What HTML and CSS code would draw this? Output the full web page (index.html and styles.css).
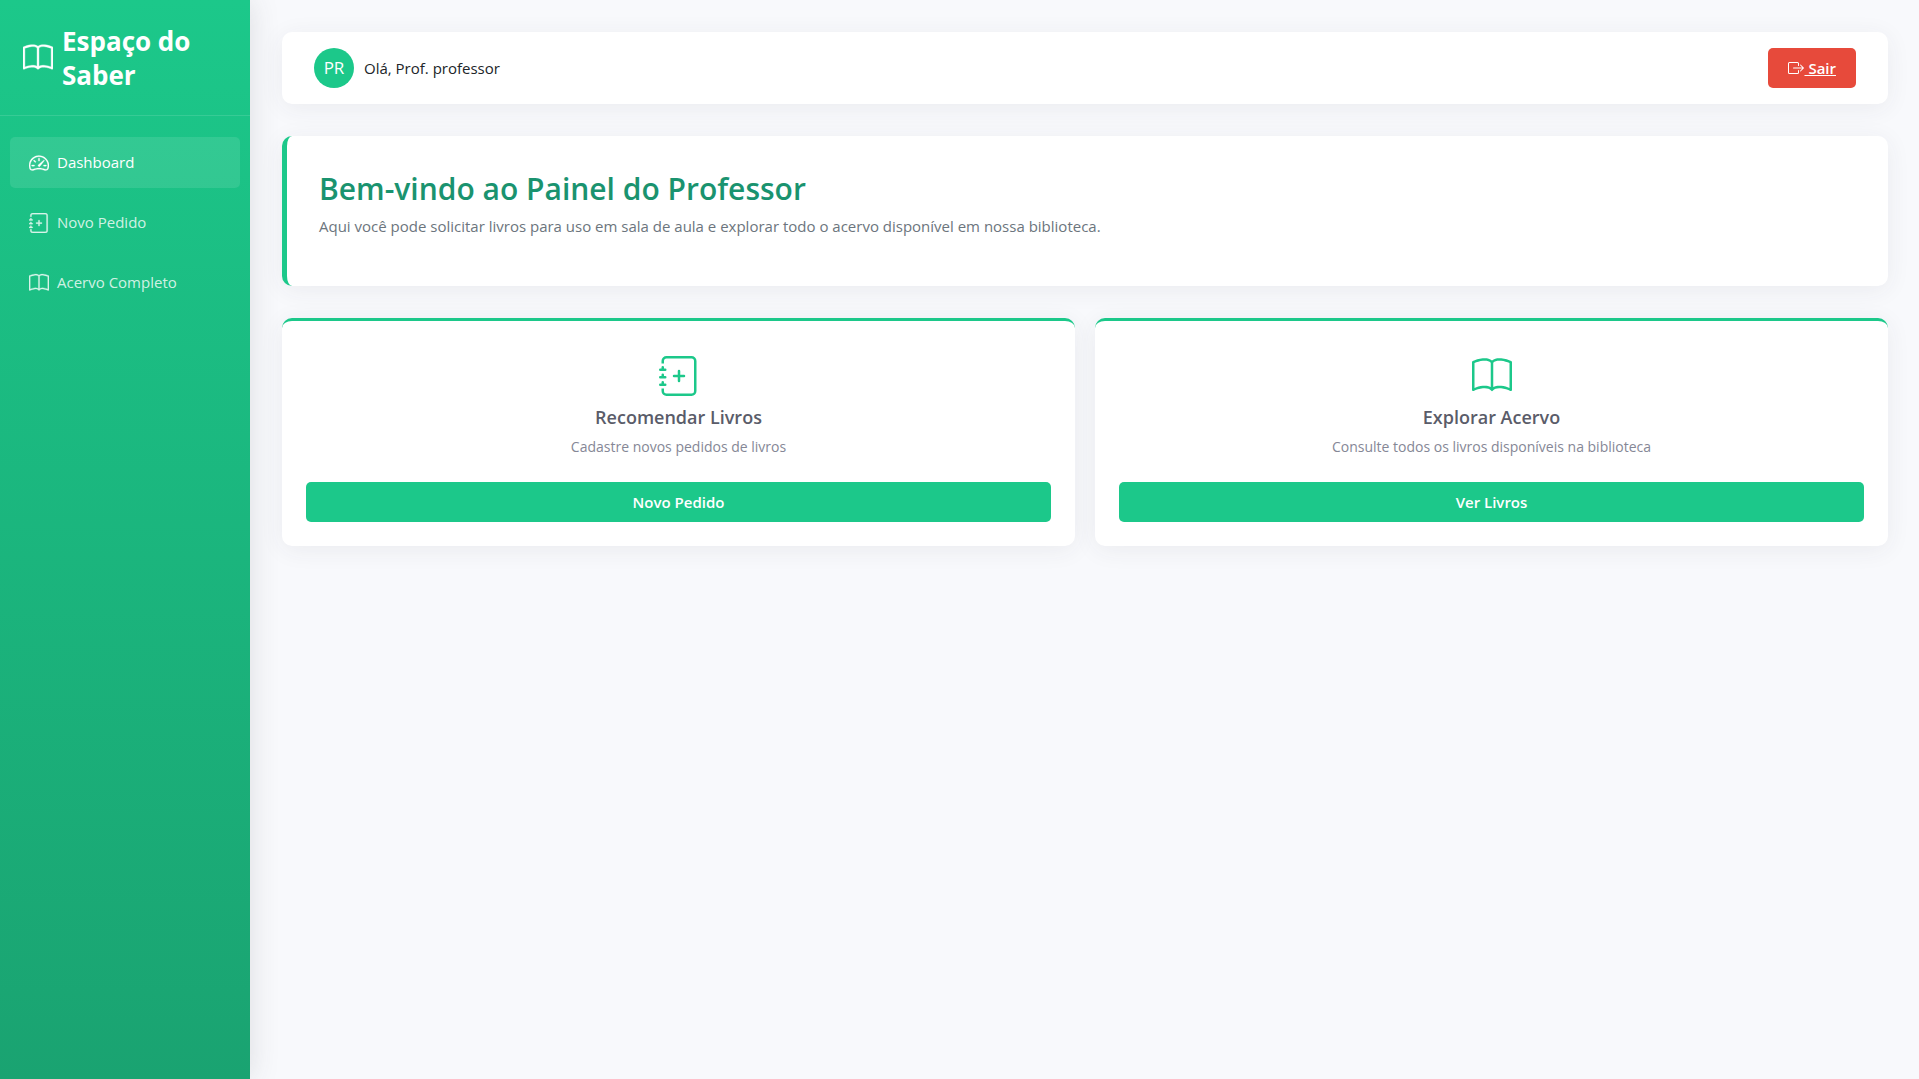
FILE: index.html
```html
<!DOCTYPE html>
<html lang="pt-BR">
<head>
<meta charset="UTF-8">
<meta name="viewport" content="width=device-width, initial-scale=1">
<title>Espaço do Saber</title>
<link rel="stylesheet" href="styles.css">
</head>
<body>
<svg class="sprite" aria-hidden="true">
  <symbol id="book" viewBox="0 0 16 16"><path d="M1 2.828c.885-.37 2.154-.769 3.388-.893 1.33-.134 2.458.063 3.112.752v9.746c-.935-.53-2.12-.603-3.213-.493-1.18.12-2.37.461-3.287.811zm7.5-.141c.654-.689 1.782-.886 3.112-.752 1.234.124 2.503.523 3.388.893v9.923c-.918-.35-2.107-.692-3.287-.81-1.094-.111-2.278-.039-3.213.492zM8 1.783C7.015.936 5.587.81 4.287.94c-1.514.153-3.042.672-3.994 1.105A.5.5 0 0 0 0 2.5v11a.5.5 0 0 0 .707.455c.882-.4 2.303-.881 3.68-1.02 1.409-.142 2.59.087 3.223.877a.5.5 0 0 0 .78 0c.633-.79 1.814-1.019 3.222-.877 1.378.139 2.8.62 3.681 1.02A.5.5 0 0 0 16 13.5v-11a.5.5 0 0 0-.293-.455c-.952-.433-2.48-.952-3.994-1.105C10.413.809 8.985.936 8 1.783"/></symbol>
  <symbol id="speedometer" viewBox="0 0 16 16"><path d="M8 4a.5.5 0 0 1 .5.5V6a.5.5 0 0 1-1 0V4.5A.5.5 0 0 1 8 4M3.732 5.732a.5.5 0 0 1 .707 0l.915.914a.5.5 0 1 1-.708.708l-.914-.915a.5.5 0 0 1 0-.707M2 10a.5.5 0 0 1 .5-.5h1.586a.5.5 0 0 1 0 1H2.5A.5.5 0 0 1 2 10m9.5 0a.5.5 0 0 1 .5-.5h1.5a.5.5 0 0 1 0 1H12a.5.5 0 0 1-.5-.5m.754-4.246a.39.39 0 0 0-.527-.02L7.547 9.31a.91.91 0 1 0 1.302 1.258l3.434-4.297a.39.39 0 0 0-.029-.518z"/><path fill-rule="evenodd" d="M0 10a8 8 0 1 1 15.547 2.661c-.442 1.253-1.845 1.602-2.932 1.25C11.309 13.488 9.475 13 8 13c-1.474 0-3.31.488-4.615.911-1.087.352-2.49.003-2.932-1.25A8 8 0 0 1 0 10m8-7a7 7 0 0 0-6.603 9.329c.203.575.923.876 1.68.63C4.397 12.533 6.358 12 8 12s3.604.532 4.923.96c.757.245 1.477-.056 1.68-.631A7 7 0 0 0 8 3"/></symbol>
  <symbol id="journal" viewBox="0 0 16 16"><path fill-rule="evenodd" d="M8 5.5a.5.5 0 0 1 .5.5v1.5H10a.5.5 0 0 1 0 1H8.5V10a.5.5 0 0 1-1 0V8.5H6a.5.5 0 0 1 0-1h1.5V6a.5.5 0 0 1 .5-.5"/><path d="M3 0h10a2 2 0 0 1 2 2v12a2 2 0 0 1-2 2H3a2 2 0 0 1-2-2v-1h1v1a1 1 0 0 0 1 1h10a1 1 0 0 0 1-1V2a1 1 0 0 0-1-1H3a1 1 0 0 0-1 1v1H1V2a2 2 0 0 1 2-2"/><path d="M1 5v-.5a.5.5 0 0 1 1 0V5h.5a.5.5 0 0 1 0 1h-2a.5.5 0 0 1 0-1zm0 3v-.5a.5.5 0 0 1 1 0V8h.5a.5.5 0 0 1 0 1h-2a.5.5 0 0 1 0-1zm0 3v-.5a.5.5 0 0 1 1 0v.5h.5a.5.5 0 0 1 0 1h-2a.5.5 0 0 1 0-1z"/></symbol>
  <symbol id="exit" viewBox="0 0 16 16"><path fill-rule="evenodd" d="M10 12.5a.5.5 0 0 1-.5.5h-8a.5.5 0 0 1-.5-.5v-9a.5.5 0 0 1 .5-.5h8a.5.5 0 0 1 .5.5v2a.5.5 0 0 0 1 0v-2A1.5 1.5 0 0 0 9.5 2h-8A1.5 1.5 0 0 0 0 3.5v9A1.5 1.5 0 0 0 1.5 14h8a1.5 1.5 0 0 0 1.5-1.5v-2a.5.5 0 0 0-1 0z"/><path fill-rule="evenodd" d="M15.854 8.354a.5.5 0 0 0 0-.708l-3-3a.5.5 0 0 0-.708.708L14.293 7.5H5.5a.5.5 0 0 0 0 1h8.793l-2.147 2.146a.5.5 0 0 0 .708.708z"/></symbol>
</svg>

<div class="layout">
  <aside class="sidebar">
    <div class="brand">
      <svg class="brand-icon" aria-hidden="true"><use href="#book"/></svg>
      <h1 class="brand-name">Espaço do Saber</h1>
    </div>
    <nav class="menu">
      <a class="menu-link active" href="#"><svg class="menu-icon" aria-hidden="true"><use href="#speedometer"/></svg>Dashboard</a>
      <a class="menu-link" href="#"><svg class="menu-icon" aria-hidden="true"><use href="#journal"/></svg>Novo Pedido</a>
      <a class="menu-link" href="#"><svg class="menu-icon" aria-hidden="true"><use href="#book"/></svg>Acervo Completo</a>
    </nav>
  </aside>

  <main class="main">
    <header class="topbar">
      <div class="user">
        <div class="avatar">PR</div>
        <span>Olá, Prof. professor</span>
      </div>
      <a class="logout" href="#"><svg class="logout-icon" aria-hidden="true"><use href="#exit"/></svg><span class="logout-text">&nbsp;Sair</span></a>
    </header>

    <section class="welcome">
      <h2 class="welcome-title">Bem-vindo ao Painel do Professor</h2>
      <p class="welcome-text">Aqui você pode solicitar livros para uso em sala de aula e explorar todo o acervo disponível em nossa biblioteca.</p>
    </section>

    <section class="cards">
      <article class="card">
        <svg class="card-icon" aria-hidden="true"><use href="#journal"/></svg>
        <h3 class="card-title">Recomendar Livros</h3>
        <p class="card-text">Cadastre novos pedidos de livros</p>
        <button class="card-button" type="button">Novo Pedido</button>
      </article>
      <article class="card">
        <svg class="card-icon" aria-hidden="true"><use href="#book"/></svg>
        <h3 class="card-title">Explorar Acervo</h3>
        <p class="card-text">Consulte todos os livros disponíveis na biblioteca</p>
        <button class="card-button" type="button">Ver Livros</button>
      </article>
    </section>
  </main>
</div>
</body>
</html>
```
FILE: styles.css
```css
:root {
  --primary: #1cc88a;
  --shadow: 0 4px 24px rgba(58, 59, 69, 0.07);
}

* {
  box-sizing: border-box;
}

body {
  margin: 0;
  background: #f8f9fc;
  color: #212529;
  font: 15px/24px "Segoe UI", "Open Sans", "Noto Sans", sans-serif;
}

h1, h2, h3, p {
  margin: 0;
}

svg {
  display: block;
  flex: none;
  fill: currentColor;
}

.sprite {
  display: none;
}

.layout {
  display: flex;
  min-height: 100vh;
}

/* Sidebar */
.sidebar {
  flex: none;
  width: 250px;
  background: linear-gradient(180deg, var(--primary) 0%, #1aa371 100%);
  color: #fff;
  box-shadow: 0 0 28px rgba(58, 59, 69, 0.15);
}

.brand {
  display: flex;
  align-items: center;
  gap: 9px;
  padding: 24px 23px 23px;
  border-bottom: 1px solid rgba(255, 255, 255, 0.12);
}

.brand-icon {
  width: 30px;
  height: 30px;
  stroke: currentColor;
  stroke-width: 0.2;
}

.brand-name {
  font-size: 26px;
  line-height: 34px;
  font-weight: 700;
}

.menu {
  display: flex;
  flex-direction: column;
  gap: 9px;
  padding: 21px 10px;
}

.menu-link {
  display: flex;
  align-items: center;
  gap: 8px;
  padding: 13px 19px;
  border-radius: 5px;
  color: rgba(255, 255, 255, 0.8);
  line-height: 25px;
  text-decoration: none;
}

.menu-link.active {
  background: rgba(255, 255, 255, 0.1);
  color: #fff;
}

.menu-icon {
  width: 20px;
  height: 20px;
  stroke: currentColor;
  stroke-width: 0.2;
}

/* Main area */
.main {
  flex: 1;
  display: flex;
  flex-direction: column;
  gap: 32px;
  padding: 32px 31px 32px 32px;
}

.topbar {
  display: flex;
  align-items: center;
  justify-content: space-between;
  padding: 16px 32px;
  border-radius: 10px;
  background: #fff;
  box-shadow: var(--shadow);
}

.user {
  display: flex;
  align-items: center;
  gap: 10px;
}

.avatar {
  display: flex;
  align-items: center;
  justify-content: center;
  width: 40px;
  height: 40px;
  border-radius: 50%;
  background: var(--primary);
  color: #fff;
  font-size: 17px;
}

.logout {
  display: flex;
  align-items: center;
  padding: 8px 20px;
  border-radius: 5px;
  background: #e74a3b;
  color: #fff;
  font-weight: 600;
  text-decoration: none;
}

.logout-icon {
  width: 16px;
  height: 16px;
}

.logout-text {
  text-decoration: underline;
}

.welcome {
  padding: 32px 32px 48px;
  border-left: 5px solid var(--primary);
  border-radius: 10px;
  background: #fff;
  box-shadow: var(--shadow);
}

.welcome-title {
  margin-bottom: 4px;
  color: #1a936f;
  font-size: 30px;
  line-height: 42px;
  font-weight: 600;
}

.welcome-text {
  color: #6c757d;
}

.cards {
  display: grid;
  grid-template-columns: 1fr 1fr;
  gap: 20px;
}

.card {
  display: flex;
  flex-direction: column;
  align-items: center;
  padding: 35px 24px 24px;
  border-top: 3px solid var(--primary);
  border-radius: 10px;
  background: #fff;
  box-shadow: var(--shadow);
  text-align: center;
}

.card-icon {
  width: 40px;
  height: 40px;
  margin-bottom: 10px;
  color: var(--primary);
}

.card-title {
  margin-bottom: 8px;
  color: #5a5c69;
  font-size: 18px;
  line-height: 22px;
  font-weight: 600;
}

.card-text {
  margin-bottom: 24px;
  color: #858796;
  font-size: 14px;
  line-height: 22px;
}

.card-button {
  width: 100%;
  padding: 8px;
  border: 0;
  border-radius: 5px;
  background: var(--primary);
  color: #fff;
  font: inherit;
  font-weight: 600;
  cursor: pointer;
}
```
